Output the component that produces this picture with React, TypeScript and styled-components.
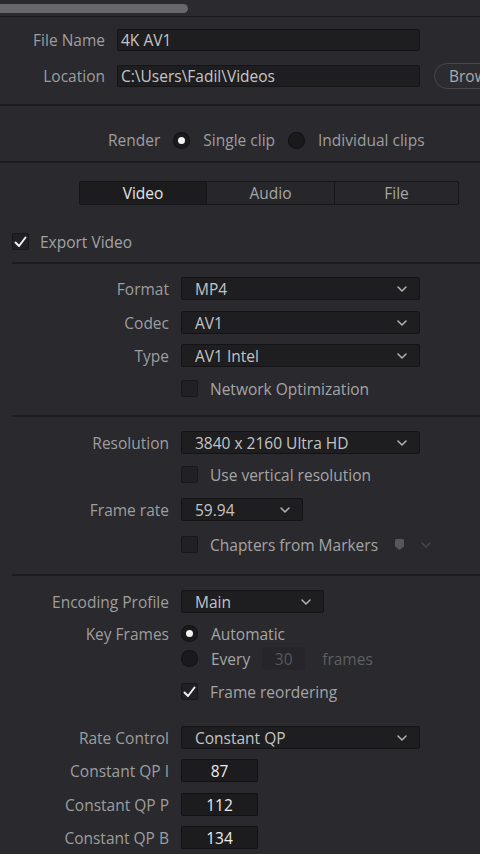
import React from "react";
import styled, { createGlobalStyle } from "styled-components";

const GlobalStyle = createGlobalStyle`
  html, body {
    margin: 0;
    padding: 0;
    background: #29292e;
  }
  body {
    font-family: "Open Sans", "Noto Sans", sans-serif;
    font-size: 15.5px;
    color: #a3a3a3;
    overflow: hidden;
  }
`;

const Page = styled.div`
  width: 480px;
  height: 854px;
  background: #29292e;
  overflow: hidden;
`;

const TopBar = styled.div`
  height: 16px;
  background: #2a2a2f;
  border-bottom: 1px solid #1b1b1e;
  display: flex;
  align-items: center;
`;

const ScrollThumb = styled.div`
  width: 188px;
  height: 9px;
  background: #67676c;
  border-radius: 0 5px 5px 0;
`;

const Section = styled.div<{ $top: number; $bottom: number }>`
  padding: ${({ $top }) => $top}px 0 ${({ $bottom }) => $bottom}px;
  display: flex;
  flex-direction: column;
`;

const Divider = styled.div<{ $inset?: number }>`
  height: 2px;
  margin-left: ${({ $inset }) => $inset || 0}px;
  background: #1c1c1f;
`;

const Row = styled.div<{ $mt?: number; $h?: number }>`
  display: flex;
  align-items: center;
  gap: 12px;
  height: ${({ $h }) => $h || 23}px;
  margin-top: ${({ $mt }) => $mt || 0}px;
`;

const Label = styled.span<{ $w?: number }>`
  width: ${({ $w }) => $w || 169}px;
  flex-shrink: 0;
  text-align: right;
  color: #9e9e9e;
  white-space: nowrap;
`;

const TextField = styled.div`
  width: 303px;
  height: 22px;
  flex-shrink: 0;
  box-sizing: border-box;
  background: #1e1e21;
  border: 1px solid #151517;
  border-radius: 2px;
  padding-left: 3px;
  display: flex;
  align-items: center;
  color: #c6c6c6;
  white-space: nowrap;
`;

const BrowseButton = styled.div`
  height: 26px;
  margin-left: 2px;
  padding: 0 16px 0 14px;
  box-sizing: border-box;
  border: 1px solid #46464b;
  border-radius: 13px;
  background: #2b2b30;
  display: flex;
  align-items: center;
  color: #ababab;
  flex-shrink: 0;
`;

const RenderRow = styled.div`
  display: flex;
  align-items: center;
  height: 22px;
  padding-left: 108px;
  gap: 13px;
  color: #9e9e9e;
`;

const Radio = styled.span<{ $on?: boolean }>`
  width: 17px;
  height: 17px;
  flex-shrink: 0;
  border-radius: 50%;
  background: #1a1a1d;
  box-shadow: inset 0 0 0 1px #141416;
  display: flex;
  align-items: center;
  justify-content: center;
  &::after {
    content: "";
    width: 7px;
    height: 7px;
    border-radius: 50%;
    background: ${({ $on }) => ($on ? "#f4f4f4" : "transparent")};
  }
`;

const Tabs = styled.div`
  margin: 18px 0 0 79px;
  width: 380px;
  height: 24px;
  box-sizing: border-box;
  display: grid;
  grid-template-columns: 126px 128px 1fr;
  border: 1px solid #161618;
  border-radius: 2px;
  background: #27272b;
  overflow: hidden;
`;

const Tab = styled.div<{ $active?: boolean }>`
  display: flex;
  align-items: center;
  justify-content: center;
  background: ${({ $active }) => ($active ? "#1c1c1f" : "#27272b")};
  color: ${({ $active }) => ($active ? "#e4e4e4" : "#a6a6a6")};
  & + & {
    border-left: 1px solid #17171a;
  }
`;

const CheckBox = styled.span`
  width: 17px;
  height: 17px;
  flex-shrink: 0;
  box-sizing: border-box;
  background: #212125;
  border: 1px solid #18181b;
  border-radius: 2px;
  display: flex;
  align-items: center;
  justify-content: center;
`;

const CheckLabel = styled.span<{ $dim?: boolean }>`
  color: ${({ $dim }) => ($dim ? "#5f5f63" : "#a5a5a5")};
  white-space: nowrap;
`;

const ExportRow = styled.div`
  display: flex;
  align-items: center;
  gap: 11px;
  height: 17px;
  margin: 28px 0 12px 12px;
  color: #a3a3a3;
`;

const Select = styled.div<{ $w: number }>`
  width: ${({ $w }) => $w}px;
  height: 23px;
  flex-shrink: 0;
  box-sizing: border-box;
  background: #1e1e21;
  border: 1px solid #141416;
  border-radius: 2px;
  padding: 0 12px 0 13px;
  display: flex;
  align-items: center;
  justify-content: space-between;
  color: #c4c4c4;
  white-space: nowrap;
`;

const NumberField = styled.div`
  width: 77px;
  height: 23px;
  box-sizing: border-box;
  background: #1c1c1f;
  border: 1px solid #121214;
  border-radius: 2px;
  display: flex;
  align-items: center;
  justify-content: center;
  color: #ececec;
`;

const EveryField = styled.div`
  width: 43px;
  height: 23px;
  box-sizing: border-box;
  background: #26262a;
  border-radius: 2px;
  display: flex;
  align-items: center;
  justify-content: center;
  color: #58585c;
  margin-left: -1px;
`;

const OptionGroup = styled.div<{ $gap?: number; $ml?: number }>`
  display: flex;
  align-items: center;
  gap: ${({ $gap }) => $gap ?? 13}px;
  margin-left: ${({ $ml }) => $ml || 0}px;
`;

const Chevron = ({ color = "#b4b4b4" }: { color?: string }) => (
  <svg width="10" height="6" viewBox="0 0 10 6">
    <polyline
      points="1,1 5,5 9,1"
      fill="none"
      stroke={color}
      strokeWidth="1.5"
      strokeLinecap="round"
      strokeLinejoin="round"
    />
  </svg>
);

const Tick = () => (
  <svg width="13" height="12" viewBox="0 0 13 12">
    <polyline
      points="1.5,6.5 5,10 11.5,1.5"
      fill="none"
      stroke="#f2f2f2"
      strokeWidth="2"
      strokeLinecap="round"
      strokeLinejoin="round"
    />
  </svg>
);

const MarkerIcon = () => (
  <svg width="11" height="13" viewBox="0 0 11 13">
    <path d="M1 2.5 Q1 1 2.5 1 H8.5 Q10 1 10 2.5 V8.5 L5.5 12 L1 8.5 Z" fill="#57575b" />
  </svg>
);

const Check = ({ on, label, dim }: { on?: boolean; label: string; dim?: boolean }) => (
  <OptionGroup $gap={12}>
    <CheckBox>{on && <Tick />}</CheckBox>
    <CheckLabel $dim={dim}>{label}</CheckLabel>
  </OptionGroup>
);

const Dropdown = ({ value, width }: { value: string; width: number }) => (
  <Select $w={width}>
    <span>{value}</span>
    <Chevron />
  </Select>
);

const App = () => {
  return (
    <Page>
      <GlobalStyle />
      <TopBar>
        <ScrollThumb />
      </TopBar>

      <Section $top={12} $bottom={17}>
        <Row $h={22}>
          <Label $w={105}>File Name</Label>
          <TextField>4K AV1</TextField>
        </Row>
        <Row $h={22} $mt={14}>
          <Label $w={105}>Location</Label>
          <TextField>C:\Users\Fadil\Videos</TextField>
          <BrowseButton>Browse</BrowseButton>
        </Row>
      </Section>
      <Divider />

      <Section $top={23} $bottom={10}>
        <RenderRow>
          <span>Render</span>
          <Radio $on />
          <span>Single clip</span>
          <Radio />
          <span>Individual clips</span>
        </RenderRow>
      </Section>
      <Divider />

      <Tabs>
        <Tab $active>Video</Tab>
        <Tab>Audio</Tab>
        <Tab>File</Tab>
      </Tabs>

      <ExportRow>
        <CheckBox>
          <Tick />
        </CheckBox>
        <span>Export Video</span>
      </ExportRow>
      <Divider $inset={12} />

      <Section $top={13} $bottom={17}>
        <Row>
          <Label>Format</Label>
          <Dropdown value="MP4" width={239} />
        </Row>
        <Row $mt={11}>
          <Label>Codec</Label>
          <Dropdown value="AV1" width={239} />
        </Row>
        <Row $mt={10}>
          <Label>Type</Label>
          <Dropdown value="AV1 Intel" width={239} />
        </Row>
        <Row $mt={12} $h={19}>
          <Label />
          <Check label="Network Optimization" />
        </Row>
      </Section>
      <Divider $inset={12} />

      <Section $top={14} $bottom={20}>
        <Row>
          <Label>Resolution</Label>
          <Dropdown value="3840 x 2160 Ultra HD" width={239} />
        </Row>
        <Row $mt={11} $h={19}>
          <Label />
          <Check label="Use vertical resolution" />
        </Row>
        <Row $mt={14}>
          <Label>Frame rate</Label>
          <Dropdown value="59.94" width={122} />
        </Row>
        <Row $mt={14} $h={19}>
          <Label />
          <Check label="Chapters from Markers" />
          <OptionGroup $gap={16} $ml={4}>
            <MarkerIcon />
            <Chevron color="#48484c" />
          </OptionGroup>
        </Row>
      </Section>
      <Divider $inset={12} />

      <Section $top={14} $bottom={0}>
        <Row>
          <Label>Encoding Profile</Label>
          <Dropdown value="Main" width={143} />
        </Row>
        <Row $mt={11} $h={19}>
          <Label>Key Frames</Label>
          <OptionGroup>
            <Radio $on />
            <CheckLabel>Automatic</CheckLabel>
          </OptionGroup>
        </Row>
        <Row $mt={4}>
          <Label />
          <OptionGroup>
            <Radio />
            <CheckLabel>Every</CheckLabel>
            <EveryField>30</EveryField>
            <CheckLabel $dim>&nbsp;frames</CheckLabel>
          </OptionGroup>
        </Row>
        <Row $mt={12} $h={19}>
          <Label />
          <Check on label="Frame reordering" />
        </Row>
        <Row $mt={25}>
          <Label>Rate Control</Label>
          <Dropdown value="Constant QP" width={239} />
        </Row>
        <Row $mt={10}>
          <Label>Constant QP I</Label>
          <NumberField>87</NumberField>
        </Row>
        <Row $mt={11}>
          <Label>Constant QP P</Label>
          <NumberField>112</NumberField>
        </Row>
        <Row $mt={10}>
          <Label>Constant QP B</Label>
          <NumberField>134</NumberField>
        </Row>
      </Section>
    </Page>
  );
};

export default App;
